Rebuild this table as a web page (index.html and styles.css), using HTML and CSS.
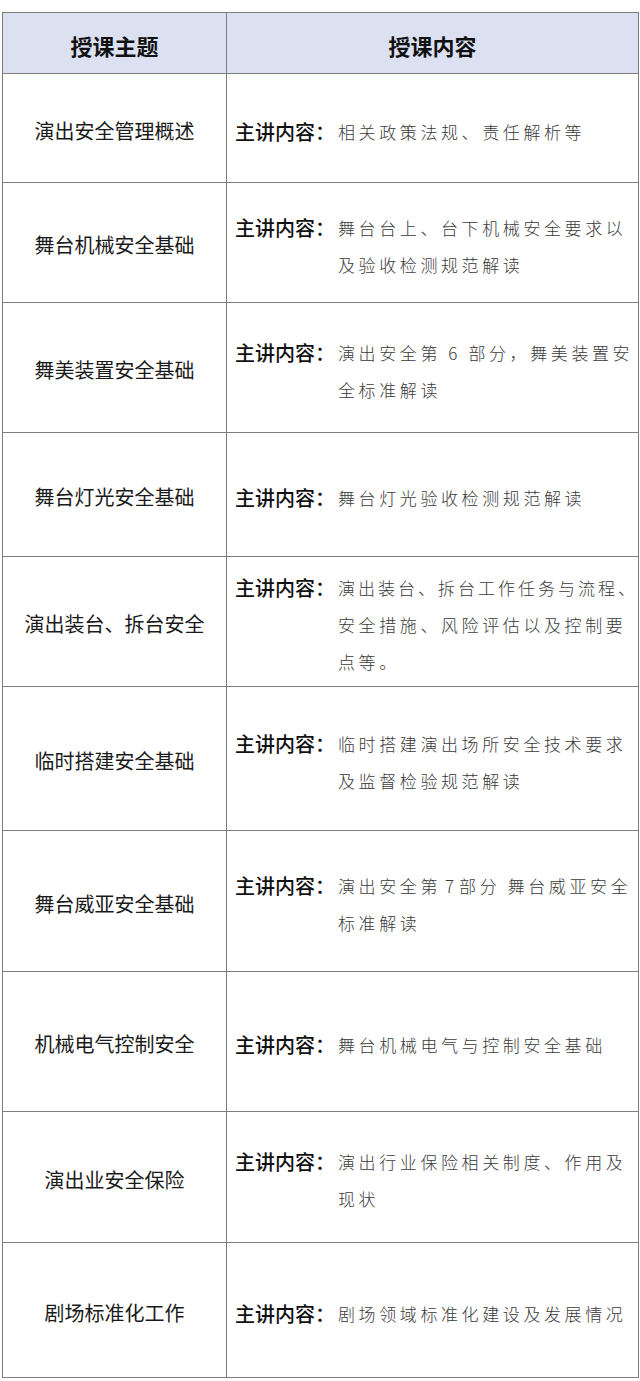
FILE: index.html
```html
<!DOCTYPE html>
<html lang="zh-CN">
<head>
<meta charset="utf-8">
<title>授课安排</title>
<link rel="stylesheet" href="styles.css">
</head>
<body>
<table class="course">
  <colgroup><col class="col-topic"><col class="col-content"></colgroup>
  <thead>
    <tr class="head-row"><th>授课主题</th><th>授课内容</th></tr>
  </thead>
  <tbody>
    <tr class="r1"><td class="topic">演出安全管理概述</td><td class="content"><div class="desc"><span class="label">主讲内容：</span><span class="text">相关政策法规、责任解析等</span></div></td></tr>
    <tr class="r2"><td class="topic">舞台机械安全基础</td><td class="content"><div class="desc"><span class="label">主讲内容：</span><span class="text">舞台台上、台下机械安全要求以<br>及验收检测规范解读</span></div></td></tr>
    <tr class="r3"><td class="topic">舞美装置安全基础</td><td class="content"><div class="desc"><span class="label">主讲内容：</span><span class="text">演出安全第 6 部分，舞美装置安<br>全标准解读</span></div></td></tr>
    <tr class="r4"><td class="topic">舞台灯光安全基础</td><td class="content"><div class="desc"><span class="label">主讲内容：</span><span class="text">舞台灯光验收检测规范解读</span></div></td></tr>
    <tr class="r5"><td class="topic">演出装台、拆台安全</td><td class="content"><div class="desc"><span class="label">主讲内容：</span><span class="text"><span class="tight">演出装台、拆台工作任务与流程、</span><br>安全措施、风险评估以及控制要<br>点等。</span></div></td></tr>
    <tr class="r6"><td class="topic">临时搭建安全基础</td><td class="content"><div class="desc"><span class="label">主讲内容：</span><span class="text">临时搭建演出场所安全技术要求<br>及监督检验规范解读</span></div></td></tr>
    <tr class="r7"><td class="topic">舞台威亚安全基础</td><td class="content"><div class="desc"><span class="label">主讲内容：</span><span class="text">演出安全第<span class="num">7</span>部分 舞台威亚安全<br>标准解读</span></div></td></tr>
    <tr class="r8"><td class="topic">机械电气控制安全</td><td class="content"><div class="desc"><span class="label">主讲内容：</span><span class="text">舞台机械电气与控制安全基础</span></div></td></tr>
    <tr class="r9"><td class="topic">演出业安全保险</td><td class="content"><div class="desc"><span class="label">主讲内容：</span><span class="text">演出行业保险相关制度、作用及<br>现状</span></div></td></tr>
    <tr class="r10"><td class="topic">剧场标准化工作</td><td class="content"><div class="desc"><span class="label">主讲内容：</span><span class="text">剧场领域标准化建设及发展情况</span></div></td></tr>
  </tbody>
</table>
</body>
</html>
```

FILE: styles.css
```css
html, body {
  margin: 0;
  padding: 0;
  background: #ffffff;
}

body {
  padding: 12px 2px 0 2px;
  font-family: "Noto Sans CJK SC", "Noto Sans", sans-serif;
  color: #1a1a1a;
}

.course {
  width: 636px;
  border-collapse: collapse;
  table-layout: fixed;
}

.col-topic { width: 224px; }
.col-content { width: 412px; }

.course th,
.course td {
  border: 1px solid #7d7d7d;
  padding: 0;
}

.head-row { height: 61px; }

.course .head-row th {
  background: #dce1f1;
  font-size: 22px;
  font-weight: 700;
  color: #111;
  text-align: center;
  vertical-align: middle;
  padding-top: 4px;
}

.course .topic {
  text-align: center;
  vertical-align: middle;
  font-size: 20px;
  font-weight: 400;
  color: #1a1a1a;
  padding-top: 4px;
}

.course .content {
  vertical-align: middle;
  padding-left: 8px;
  padding-top: 6px;
}

.desc {
  display: flex;
  align-items: flex-start;
  white-space: nowrap;
  line-height: 37px;
}

.label {
  flex: none;
  width: 103px;
  font-size: 20px;
  font-weight: 500;
  color: #111;
}

.text {
  font-size: 17px;
  letter-spacing: 3.6px;
  font-weight: 300;
  color: #3a3a3a;
}

.num {
  letter-spacing: 0;
  margin: 0 5px 0 4px;
}

.tight {
  letter-spacing: 3px;
}

.r1 { height: 109px; }
.r2 { height: 120px; }
.r3 { height: 130px; }
.r4 { height: 124px; }
.r5 { height: 130px; }
.r6 { height: 144px; }
.r7 { height: 141px; }
.r8 { height: 140px; }
.r9 { height: 131px; }
.r10 { height: 135px; }
```
